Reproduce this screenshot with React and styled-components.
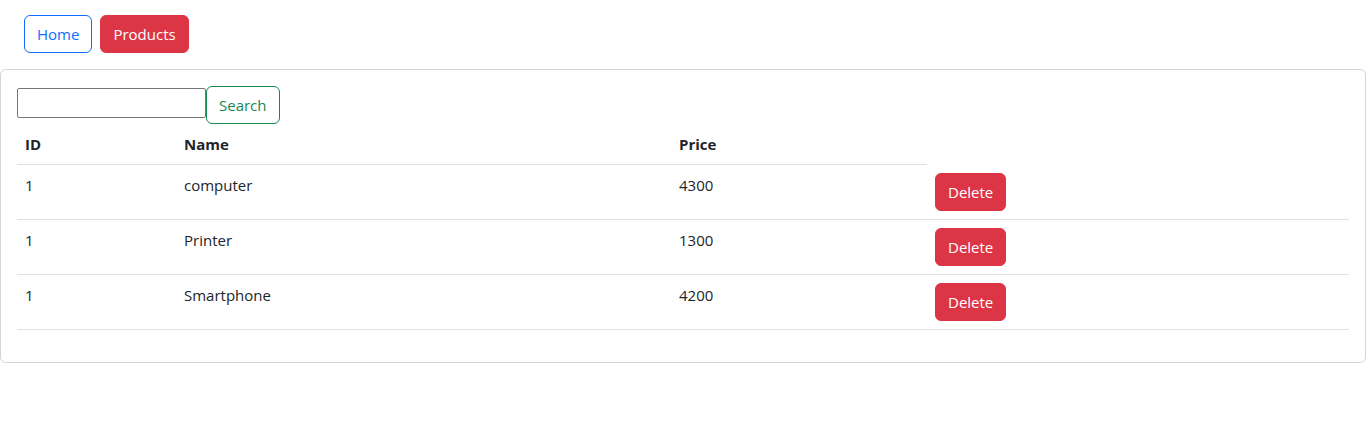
import styled, { createGlobalStyle } from "styled-components";

const GlobalStyle = createGlobalStyle`
    body {
        margin: 0;
        font-family: "Segoe UI", "Open Sans", "Liberation Sans", sans-serif;
        font-size: 15px;
        line-height: 24px;
        color: #212529;
        background: #fff;
    }
    * { box-sizing: border-box; }
`

const products = [
    { id: 1, name: "computer", price: 4300 },
    { id: 1, name: "Printer", price: 1300 },
    { id: 1, name: "Smartphone", price: 4200 },
]

export default function App() {
    return (
        <>
            <GlobalStyle />
            <Nav>
                <Button $variant="outline-primary">Home</Button>
                <Button $variant="danger">Products</Button>
            </Nav>
            <Card>
                <SearchBar>
                    <Input type="text" />
                    <Button $variant="outline-success">Search</Button>
                </SearchBar>
                <Table>
                    <colgroup>
                        <col style={{ width: 159 }} />
                        <col style={{ width: 495 }} />
                        <col style={{ width: 256 }} />
                        <col />
                    </colgroup>
                    <thead>
                        <tr>
                            <Th>ID</Th>
                            <Th>Name</Th>
                            <Th>Price</Th>
                        </tr>
                    </thead>
                    <tbody>
                        {products.map((p, i) => (
                            <tr key={i}>
                                <Td>{p.id}</Td>
                                <Td>{p.name}</Td>
                                <Td>{p.price}</Td>
                                <Td>
                                    <Button $variant="danger">Delete</Button>
                                </Td>
                            </tr>
                        ))}
                    </tbody>
                </Table>
            </Card>
        </>
    )
}

const variants = {
    "outline-primary": "color: #0d6efd; background: transparent; border-color: #0d6efd;",
    "outline-success": "color: #198754; background: transparent; border-color: #198754;",
    "danger": "color: #fff; background: #dc3545; border-color: #dc3545;",
}

const Button = styled.button`
    font-family: inherit;
    font-size: 15px;
    line-height: 24px;
    padding: 6px 12px;
    border: 1px solid;
    border-radius: 6px;
    cursor: pointer;
    ${({ $variant }) => variants[$variant]}
`

const Nav = styled.nav`
    display: flex;
    gap: 8px;
    padding: 15px 24px 16px;
`

const Card = styled.section`
    border: 1px solid #d3d4d5;
    border-radius: 6px;
    padding: 16px;
`

const SearchBar = styled.form`
    display: flex;
    align-items: flex-start;
`

const Input = styled.input`
    width: 189px;
    height: 30px;
    margin-top: 2px;
    font-family: inherit;
    font-size: 15px;
    border: 1px solid #767676;
    border-radius: 2px;
    padding: 1px 2px;
`

const Table = styled.table`
    width: 100%;
    border-collapse: collapse;
    table-layout: fixed;
    margin-bottom: 16px;
`

const Th = styled.th`
    text-align: left;
    vertical-align: top;
    font-weight: 700;
    padding: 8px;
    border-bottom: 1px solid #dee2e6;
`

const Td = styled.td`
    vertical-align: top;
    padding: 8px;
    border-bottom: 1px solid #dee2e6;
`
